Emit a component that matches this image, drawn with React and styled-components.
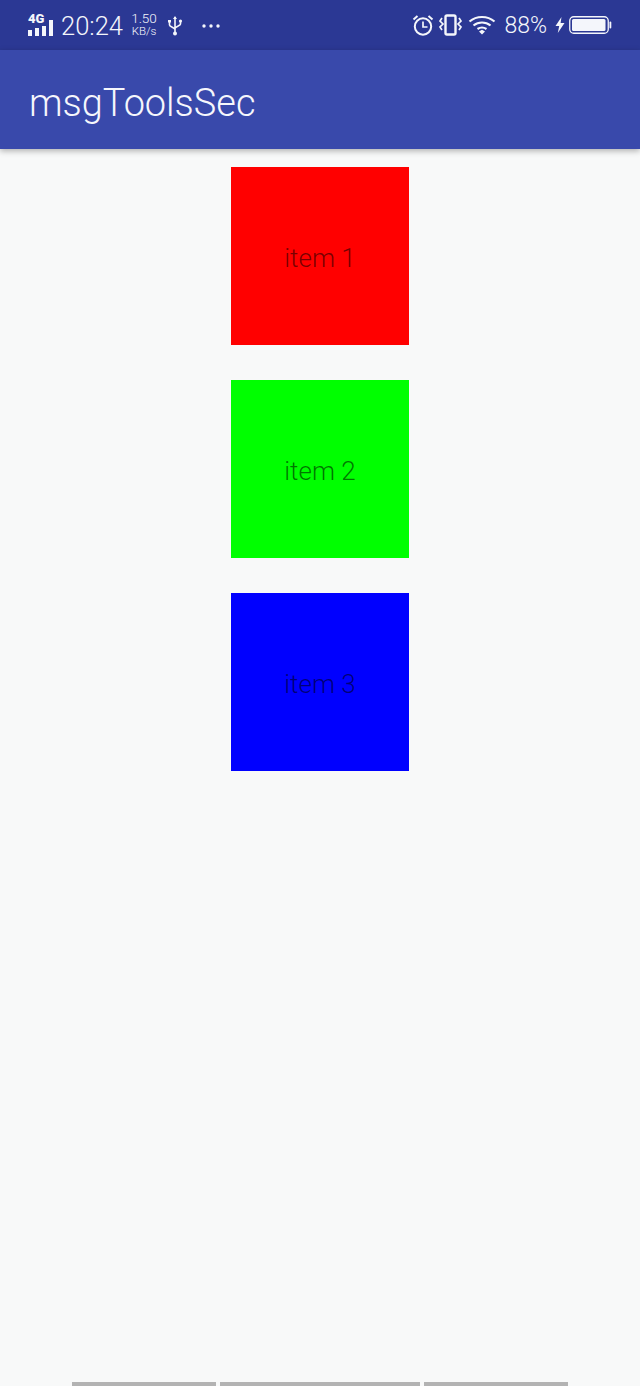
import React from "react";
import styled, { createGlobalStyle } from "styled-components";

const Global = createGlobalStyle`
  html, body { margin: 0; padding: 0; background: #f8f9f9; }
  #root { width: 640px; height: 1386px; overflow: hidden; }
`;
const Page = styled.div`
  width: 640px; height: 1386px; display: flex; flex-direction: column;
  background: #f8f9f9; font-family: Roboto, "Liberation Sans", sans-serif;
`;
const StatusBar = styled.div`
  height: 50px; flex: none; background: #2b3894; color: #f4f6fb;
  display: flex; align-items: center; justify-content: space-between;
  padding: 2px 28px 0 28px; box-sizing: border-box;
`;
const Side = styled.div`display: flex; align-items: center; margin-top: ${p => p.$lift ? "-2px" : "0"};`;
const SignalWrap = styled.div`width: 26px; height: 22px; position: relative; flex: none;`;
const NetworkBadge = styled.span`
  position: absolute; left: 0; top: -3px; font-size: 13px; font-weight: 900; line-height: 13px;
`;
const Clock = styled.span`font-size: 25.5px; font-weight: 300; line-height: 48px; margin-left: 7px; width: 63px; white-space: nowrap;`;
const Speed = styled.div`
  display: flex; flex-direction: column; align-items: center; margin-left: 7px; width: 26px;
  margin-top: -2px; font-weight: 300;
`;
const SpeedValue = styled.span`font-size: 13.5px; line-height: 13px; height: 13px;`;
const SpeedUnit = styled.span`font-size: 11.5px; line-height: 13px; height: 13px;`;
const Battery = styled.span`font-size: 23px; font-weight: 300; margin: 0 8px 0 8px; white-space: nowrap;`;
const AppBar = styled.header`
  height: 99px; flex: none; background: #3949ab; color: #f6f7fc;
  display: flex; align-items: center; padding: 8px 0 0 29px; box-sizing: border-box;
  box-shadow: 0 2px 6px rgba(0,0,0,0.3); position: relative;
`;
const Title = styled.h1`margin: 0; font-size: 37.9px; font-weight: 300; line-height: 1;`;
const List = styled.main`
  flex: 1; display: flex; flex-direction: column; align-items: center; gap: 35px; padding-top: 18px;
`;
const Item = styled.div`
  width: 178px; height: 178px; background: ${p => p.$color};
  display: flex; align-items: center; justify-content: center;
  font-size: 26px; font-weight: 300; color: rgba(0,0,0,0.55);
  padding-top: 3px; box-sizing: border-box;
`;
const BottomBars = styled.div`
  display: flex; justify-content: center; gap: 4px; height: 4px; flex: none;
`;
const Bar = styled.div`width: ${p => p.$w}px; background: #b3b3b3;`;

const Signal = () => (
  <SignalWrap>
    <NetworkBadge>4G</NetworkBadge>
    <svg width="26" height="22" viewBox="0 0 26 22" fill="currentColor">
      <rect x="0" y="15" width="4" height="6" />
      <rect x="7" y="13" width="4" height="8" />
      <rect x="14" y="11" width="4" height="10" />
      <rect x="21" y="5" width="4" height="16" />
    </svg>
  </SignalWrap>
);
const Usb = () => (
  <svg width="16" height="20" viewBox="0 0 16 20" fill="none" stroke="currentColor" strokeWidth="1.6" style={{ marginLeft: 10 }}>
    <path d="M8 1v17M2.5 6v3c0 2 5.5 2.5 5.5 4.5M13.5 6v2c0 2-5.5 2.5-5.5 4.5" />
    <path d="M8 0l2 3H6zM1 4h3v2.5H1z" fill="currentColor" stroke="none" />
    <circle cx="13.5" cy="5" r="1.6" fill="currentColor" stroke="none" />
    <circle cx="8" cy="17.5" r="2" fill="currentColor" stroke="none" />
  </svg>
);
const Dots = () => (
  <svg width="20" height="6" viewBox="0 0 20 6" fill="currentColor" style={{ marginLeft: 18 }}>
    <circle cx="3" cy="3" r="1.7" /><circle cx="10" cy="3" r="1.7" /><circle cx="17" cy="3" r="1.7" />
  </svg>
);
const Alarm = () => (
  <svg width="22" height="22" viewBox="0 0 22 22" fill="none" stroke="currentColor" strokeWidth="2">
    <circle cx="11" cy="12.5" r="8.2" />
    <path d="M11 7.5v5.5h4.5" strokeWidth="1.7" />
    <path d="M1.5 5.5L5.5 2M20.5 5.5L16.5 2" />
  </svg>
);
const Vibrate = () => (
  <svg width="23" height="22" viewBox="0 0 23 22" fill="none" stroke="currentColor" strokeWidth="1.7" style={{ marginLeft: 5 }}>
    <rect x="6.5" y="1.5" width="10" height="19" rx="1.5" strokeWidth="2.4" />
    <path d="M3 4L1 7l3 3-3 3 2 3M20 4l2 3-3 3 3 3-2 3" />
  </svg>
);
const Wifi = () => (
  <svg width="28" height="20" viewBox="0 0 28 20" fill="none" stroke="currentColor" strokeWidth="2.2" style={{ marginLeft: 6 }}>
    <path d="M1.5 6.5C8.5 0.5 19.5 0.5 26.5 6.5" />
    <path d="M5.5 10.5C10.5 6.5 17.5 6.5 22.5 10.5" />
    <path d="M9.5 14C12.5 12 15.5 12 18.5 14" />
    <path d="M11 16.5L14 14.8L17 16.5L14 19.5Z" fill="currentColor" stroke="none" />
  </svg>
);
const Bolt = () => (
  <svg width="10" height="16" viewBox="0 0 10 16" fill="currentColor">
    <path d="M6.5 0L0.5 9H4.2L2.8 16L9.5 6H5.6Z" />
  </svg>
);
const BatteryIcon = () => (
  <svg width="43" height="18" viewBox="0 0 43 18" style={{ marginLeft: 4 }}>
    <rect x="0.75" y="0.75" width="38.5" height="16.5" rx="4" fill="none" stroke="currentColor" strokeWidth="1.3" />
    <rect x="3" y="3" width="33.5" height="12" rx="1.5" fill="currentColor" />
    <rect x="40.5" y="5.5" width="1.8" height="7" rx="0.9" fill="currentColor" />
  </svg>
);

export default function App() {
  return (
    <Page>
      <Global />
      <StatusBar>
        <Side>
          <Signal />
          <Clock>20:24</Clock>
          <Speed><SpeedValue>1.50</SpeedValue><SpeedUnit>KB/s</SpeedUnit></Speed>
          <Usb />
          <Dots />
        </Side>
        <Side $lift>
          <Alarm />
          <Vibrate />
          <Wifi />
          <Battery>88%</Battery>
          <Bolt />
          <BatteryIcon />
        </Side>
      </StatusBar>
      <AppBar><Title>msgToolsSec</Title></AppBar>
      <List>
        <Item $color="#ff0000">item 1</Item>
        <Item $color="#00ff00">item 2</Item>
        <Item $color="#0000ff">item 3</Item>
      </List>
      <BottomBars>
        <Bar $w={144} />
        <Bar $w={200} />
        <Bar $w={144} />
      </BottomBars>
    </Page>
  );
}
